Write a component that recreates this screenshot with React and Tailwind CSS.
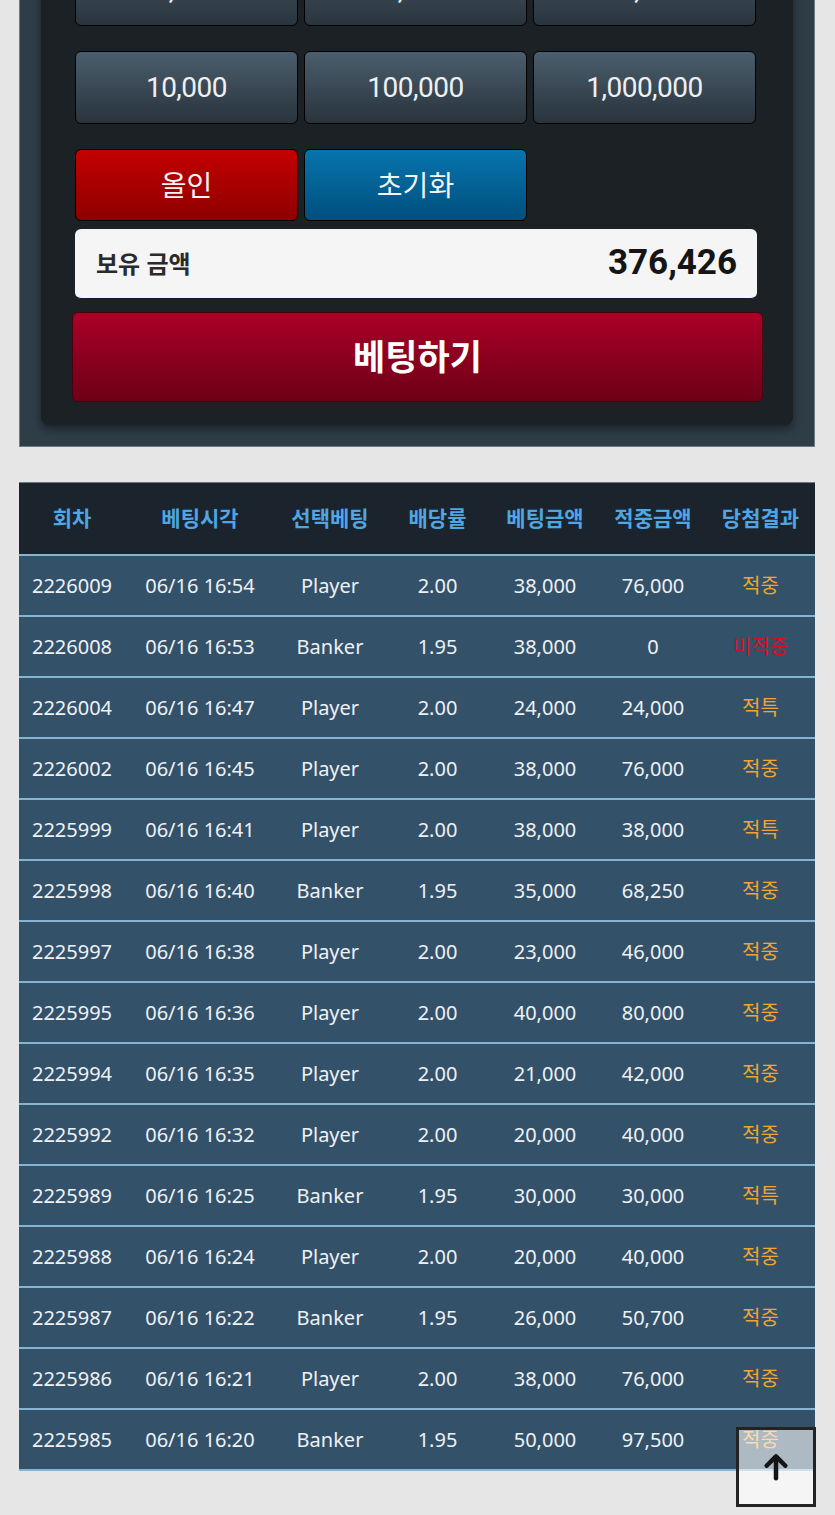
import React from 'react';

const ko = { fontFamily: '"Noto Sans", "Noto Sans CJK KR", sans-serif' };
const rob = { fontFamily: 'Roboto, "Noto Sans CJK KR", sans-serif' };

const chips = [
  ['1,000', '5,000', '50,000'],
  ['10,000', '100,000', '1,000,000'],
];

const rows = [
  ['2226009', '06/16 16:54', 'Player', '2.00', '38,000', '76,000', '적중'],
  ['2226008', '06/16 16:53', 'Banker', '1.95', '38,000', '0', '미적중'],
  ['2226004', '06/16 16:47', 'Player', '2.00', '24,000', '24,000', '적특'],
  ['2226002', '06/16 16:45', 'Player', '2.00', '38,000', '76,000', '적중'],
  ['2225999', '06/16 16:41', 'Player', '2.00', '38,000', '38,000', '적특'],
  ['2225998', '06/16 16:40', 'Banker', '1.95', '35,000', '68,250', '적중'],
  ['2225997', '06/16 16:38', 'Player', '2.00', '23,000', '46,000', '적중'],
  ['2225995', '06/16 16:36', 'Player', '2.00', '40,000', '80,000', '적중'],
  ['2225994', '06/16 16:35', 'Player', '2.00', '21,000', '42,000', '적중'],
  ['2225992', '06/16 16:32', 'Player', '2.00', '20,000', '40,000', '적중'],
  ['2225989', '06/16 16:25', 'Banker', '1.95', '30,000', '30,000', '적특'],
  ['2225988', '06/16 16:24', 'Player', '2.00', '20,000', '40,000', '적중'],
  ['2225987', '06/16 16:22', 'Banker', '1.95', '26,000', '50,700', '적중'],
  ['2225986', '06/16 16:21', 'Player', '2.00', '38,000', '76,000', '적중'],
  ['2225985', '06/16 16:20', 'Banker', '1.95', '50,000', '97,500', '적중'],
];

const headers = ['회차', '베팅시각', '선택베팅', '배당률', '베팅금액', '적중금액', '당첨결과'];
const widths = ['w-[106px]', 'w-[150px]', 'w-[110px]', 'w-[105px]', 'w-[110px]', 'w-[106px]', 'w-[109px]'];

function ChipButton({ label }) {
  return (
    <button
      className="h-[73px] rounded-md border border-black bg-gradient-to-b from-[#4b5e6d] to-[#29343d] text-[28px] font-normal tracking-[-0.5px] text-[#eef0f2]"
      style={rob}
    >
      {label}
    </button>
  );
}

export default function App() {
  return (
    <div className="min-h-screen w-[835px] bg-[#e6e6e6] pb-[60px]">
      {/* bet panel, scrolled so the first chip row is half off screen */}
      <div className="ml-[19px] mt-[-68px] w-[796px] border border-[#6d7b86] bg-[#2f3d47] px-[21px] pb-[21px]">
        <div className="rounded-b-lg bg-[#1b2125] pb-[23px] pl-[31px] pr-[30px] pt-[20px] shadow-[0_4px_8px_rgba(0,0,0,0.45)]">
          <div className="ml-[3px] mr-[7px] flex flex-col gap-[25px]">
            {chips.map((r, i) => (
              <div key={i} className="grid grid-cols-3 gap-[6px]">
                {r.map((c) => (
                  <ChipButton key={c} label={c} />
                ))}
              </div>
            ))}
            <div className="grid grid-cols-3 gap-[6px]">
              <button
                className="h-[72px] rounded-md border border-black bg-gradient-to-b from-[#c40000] to-[#8e0000] text-[28px] text-[#f4f4f4]"
                style={ko}
              >
                올인
              </button>
              <button
                className="h-[72px] rounded-md border border-black bg-gradient-to-b from-[#0874ad] to-[#00507f] text-[28px] text-[#f4f4f4]"
                style={ko}
              >
                초기화
              </button>
            </div>
          </div>

          <div className="ml-[3px] mr-[6px] mt-[8px] flex h-[70px] items-center justify-between rounded-md border-b border-[#0c1a3a] bg-[#f5f5f6] pl-[21px] pr-[20px]">
            <span className="text-[24px] font-bold text-[#2a2a2a]" style={ko}>보유 금액</span>
            <span className="text-[35px] font-bold text-[#151515]" style={rob}>376,426</span>
          </div>

          <button
            className="mt-[13px] flex h-[90px] w-full items-center justify-center rounded-md border border-[#4a0010] bg-gradient-to-b from-[#ab0028] to-[#6e0016] text-[35px] font-bold text-white"
            style={ko}
          >
            베팅하기
          </button>
        </div>
      </div>

      {/* history table */}
      <div className="ml-[19px] mt-[35px] w-[796px] border-t border-[#6d7b86]" style={ko}>
        <div className="flex h-[73px] items-center border-b-2 border-[#86b4d3] bg-[#1b242c]">
          {headers.map((h, i) => (
            <div key={h} className={`${widths[i]} text-center text-[21px] font-bold text-[#4ea6e4]`}>
              {h}
            </div>
          ))}
        </div>
        {rows.map((r) => (
          <div key={r[0]} className="flex h-[61px] items-center border-b-2 border-[#86b4d3] bg-[#34516a]">
            {r.map((c, i) => {
              let color = 'text-[#eef1f4]';
              if (i === 6) color = c === '미적중' ? 'text-[#d3101c]' : 'text-[#f2a52e]';
              return (
                <div key={i} className={`${widths[i]} text-center text-[20px] ${color}`}>
                  {c}
                </div>
              );
            })}
          </div>
        ))}
      </div>

      {/* scroll to top */}
      <button className="fixed bottom-[8px] right-[19px] flex h-[80px] w-[80px] items-center justify-center border-[3px] border-[#232323] bg-white/60">
        <svg width="30" height="30" viewBox="0 0 24 24" fill="none" stroke="#151515" strokeWidth="3.6" strokeLinecap="round" strokeLinejoin="round">
          <path d="M12 21V4" />
          <path d="M4.5 11L12 3.5L19.5 11" />
        </svg>
      </button>
    </div>
  );
}
